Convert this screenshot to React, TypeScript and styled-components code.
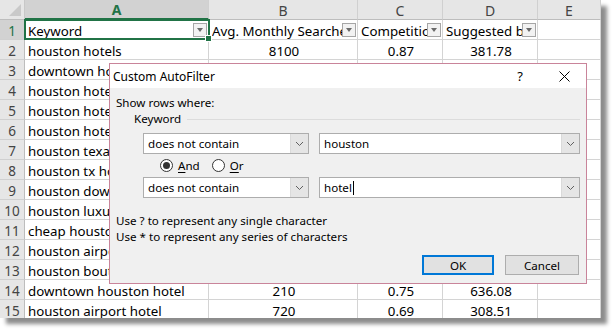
import React from "react";
import styled, { createGlobalStyle, css } from "styled-components";

const GlobalStyle = createGlobalStyle`
  html, body { margin: 0; padding: 0; background: #ffffff; }
  #root { width: 616px; height: 333px; }
`;

const GREEN = "#217346";

const Page = styled.div`
  position: relative;
  width: 616px;
  height: 333px;
  overflow: hidden;
  background: #ffffff;
`;

const Sheet = styled.div`
  width: 601px;
  height: 318px;
  overflow: hidden;
  display: grid;
  grid-template-columns: 25px 184px 149px 85px 95px 63px;
  grid-template-rows: 20px repeat(15, 20px);
  box-shadow: 6px 6px 4px rgba(0, 0, 0, 0.45);
  background: #ffffff;
  font-family: "Noto Sans", "Open Sans", sans-serif;
`;

const Corner = styled.div`
  position: relative;
  background: #e6e6e6;
  border-right: 1px solid #c8c8c8;
  border-bottom: 1px solid #bdbdbd;
  box-sizing: border-box;
  &::after {
    content: "";
    position: absolute;
    right: 3px;
    bottom: 3px;
    width: 0;
    height: 0;
    border-left: 12px solid transparent;
    border-bottom: 12px solid #c9c9c9;
  }
`;

const ColHeader = styled.div<{ $selected?: boolean }>`
  display: flex;
  align-items: center;
  justify-content: center;
  box-sizing: border-box;
  background: ${(p) => (p.$selected ? "#d2d2d2" : "#e6e6e6")};
  border-right: 1px solid #d0d0d0;
  border-bottom: ${(p) => (p.$selected ? `2px solid ${GREEN}` : "1px solid #bdbdbd")};
  color: ${(p) => (p.$selected ? GREEN : "#444444")};
  font-weight: ${(p) => (p.$selected ? 700 : 400)};
  font-size: 14px;
  padding-top: 1px;
`;

const RowHeader = styled.div<{ $selected?: boolean }>`
  display: flex;
  align-items: center;
  justify-content: center;
  box-sizing: border-box;
  background: ${(p) => (p.$selected ? "#d2d2d2" : "#e6e6e6")};
  border-right: 1px solid #bdbdbd;
  border-bottom: 1px solid #d0d0d0;
  color: ${(p) => (p.$selected ? GREEN : "#444444")};
  font-size: 13.5px;
  padding-top: 2px;
`;

const Cell = styled.div<{ $center?: boolean; $active?: boolean }>`
  position: relative;
  display: flex;
  align-items: center;
  justify-content: ${(p) => (p.$center ? "center" : "flex-start")};
  box-sizing: border-box;
  border-right: 1px solid #d4d4d4;
  border-bottom: 1px solid #d4d4d4;
  padding: 3px 1px 0 3px;
  font-size: 13.3px;
  color: #000000;
  white-space: nowrap;
  overflow: ${(p) => (p.$active ? "visible" : "hidden")};
  ${(p) =>
    p.$active &&
    css`
      z-index: 2;
      &::before {
        content: "";
        position: absolute;
        left: -1px;
        top: -1px;
        right: -2px;
        bottom: -1px;
        border: 2px solid ${GREEN};
        pointer-events: none;
      }
      &::after {
        content: "";
        position: absolute;
        right: -4px;
        bottom: -3px;
        width: 5px;
        height: 5px;
        background: ${GREEN};
        border: 1px solid #ffffff;
      }
    `}
`;

const CellText = styled.span`
  flex: 1;
  min-width: 0;
  overflow: hidden;
  white-space: nowrap;
`;

const FilterButton = styled.span`
  flex: 0 0 auto;
  width: 14px;
  height: 14px;
  margin-top: -2px;
  box-sizing: border-box;
  border: 1px solid #a6a6a6;
  background: #f2f2f2;
  display: flex;
  align-items: center;
  justify-content: center;
  &::after {
    content: "";
    width: 0;
    height: 0;
    border-left: 3.5px solid transparent;
    border-right: 3.5px solid transparent;
    border-top: 4px solid #6a6a6a;
  }
`;

/* ---------- dialog ---------- */

const Dialog = styled.div`
  position: absolute;
  left: 109px;
  top: 63px;
  width: 478px;
  height: 221px;
  box-sizing: border-box;
  border: 1px solid #c9849a;
  background: #f0f0f0;
  display: flex;
  flex-direction: column;
  font-family: "Noto Sans", "Open Sans", sans-serif;
  font-size: 11.6px;
  color: #000000;
  z-index: 5;
`;

const TitleBar = styled.div`
  height: 24px;
  flex: 0 0 24px;
  background: #ffffff;
  display: flex;
  align-items: center;
  padding-left: 3px;
`;

const Title = styled.span`
  flex: 1;
  font-size: 12px;
  padding-top: 1px;
`;

const TitleButton = styled.span`
  width: 44px;
  display: flex;
  align-items: center;
  justify-content: center;
  font-size: 13px;
`;

const Body = styled.div`
  flex: 1;
  display: flex;
  flex-direction: column;
  padding: 7px 6px 8px 6px;
`;

const Line = styled.div<{ $indent?: number; $top?: number }>`
  height: 16px;
  line-height: 16px;
  display: flex;
  align-items: center;
  margin-left: ${(p) => p.$indent ?? 0}px;
  margin-top: ${(p) => p.$top ?? 0}px;
  white-space: nowrap;
`;

const GroupRule = styled.span`
  flex: 1;
  height: 1px;
  background: #dcdcdc;
  margin-left: 6px;
`;

const CriteriaRow = styled.div<{ $top: number }>`
  display: flex;
  gap: 10px;
  margin-left: 27px;
  margin-top: ${(p) => p.$top}px;
`;

const Combo = styled.div<{ $width: number }>`
  width: ${(p) => p.$width}px;
  height: 21px;
  box-sizing: border-box;
  border: 1px solid #adadad;
  background: #ffffff;
  display: flex;
  align-items: stretch;
`;

const ComboText = styled.span`
  flex: 1;
  display: flex;
  align-items: center;
  padding-left: 4px;
`;

const Caret = styled.span`
  display: inline-block;
  width: 1px;
  height: 14px;
  background: #000000;
  margin-left: 1px;
`;

const DropButton = styled.span`
  width: 17px;
  background: #e5e5e5;
  border-left: 1px solid #dadada;
  display: flex;
  align-items: center;
  justify-content: center;
`;

const RadioRow = styled.div`
  display: flex;
  align-items: center;
  height: 16px;
  margin-top: 3px;
  margin-left: 44px;
  gap: 12px;
`;

const RadioLabel = styled.label`
  display: flex;
  align-items: center;
  gap: 5px;
`;

const RadioCircle = styled.span<{ $checked?: boolean }>`
  width: 13px;
  height: 13px;
  box-sizing: border-box;
  border: 1px solid #333333;
  border-radius: 50%;
  background: #ffffff;
  display: flex;
  align-items: center;
  justify-content: center;
  &::after {
    content: "";
    width: 7px;
    height: 7px;
    border-radius: 50%;
    background: ${(p) => (p.$checked ? "#333333" : "transparent")};
  }
`;

const Mnemonic = styled.span`
  text-decoration: underline;
  text-underline-offset: 2px;
`;

const ButtonRow = styled.div`
  display: flex;
  justify-content: flex-end;
  gap: 11px;
  margin-top: 10px;
  margin-right: 1px;
`;

const DlgButton = styled.button<{ $default?: boolean; $width: number }>`
  width: ${(p) => p.$width}px;
  height: 20px;
  box-sizing: border-box;
  margin: 0;
  padding: 0;
  background: #e1e1e1;
  border: ${(p) => (p.$default ? "2px solid #0078d7" : "1px solid #adadad")};
  font-family: "Noto Sans", "Open Sans", sans-serif;
  font-size: 11.6px;
  color: #000000;
`;

const Chevron = () => (
  <svg width="9" height="6" viewBox="0 0 9 6">
    <path d="M1 1 L4.5 4.5 L8 1" fill="none" stroke="#606060" strokeWidth="1" />
  </svg>
);

const CloseIcon = () => (
  <svg width="11" height="11" viewBox="0 0 11 11">
    <path d="M0.5 0.5 L10.5 10.5 M10.5 0.5 L0.5 10.5" stroke="#000" strokeWidth="1" />
  </svg>
);

const rows: string[][] = [
  ["Keyword", "Avg. Monthly Searches", "Competition", "Suggested bid"],
  ["houston hotels", "8100", "0.87", "381.78"],
  ["downtown houston hotels", "1300", "0.83", "504.09"],
  ["houston hotels downtown", "1000", "0.86", "497.51"],
  ["houston hotels near galleria", "880", "0.91", "443.28"],
  ["houston hotels medical center", "590", "0.84", "512.33"],
  ["houston texas hotels", "880", "0.88", "356.17"],
  ["houston tx hotels", "720", "0.85", "379.46"],
  ["houston downtown hotels", "480", "0.81", "528.60"],
  ["houston luxury hotels", "390", "0.72", "602.14"],
  ["cheap houston hotels", "320", "0.95", "212.47"],
  ["houston airport hotels", "880", "0.74", "301.92"],
  ["houston boutique hotels", "260", "0.68", "588.35"],
  ["downtown houston hotel", "210", "0.75", "636.08"],
  ["houston airport hotel", "720", "0.69", "308.51"],
];

const columns = ["A", "B", "C", "D", "E"];

export default function App() {
  return (
    <Page>
      <GlobalStyle />
      <Sheet>
        <Corner />
        {columns.map((c) => (
          <ColHeader key={c} $selected={c === "A"}>
            {c}
          </ColHeader>
        ))}
        {rows.map((r, i) => (
          <React.Fragment key={i}>
            <RowHeader $selected={i === 0}>{i + 1}</RowHeader>
            {i === 0 ? (
              <>
                {r.map((h, j) => (
                  <Cell key={j} $active={j === 0}>
                    <CellText>{h}</CellText>
                    <FilterButton />
                  </Cell>
                ))}
                <Cell />
              </>
            ) : (
              <>
                <Cell>{r[0]}</Cell>
                <Cell $center>{r[1]}</Cell>
                <Cell $center>{r[2]}</Cell>
                <Cell $center>{r[3]}</Cell>
                <Cell />
              </>
            )}
          </React.Fragment>
        ))}
      </Sheet>

      <Dialog>
        <TitleBar>
          <Title>Custom AutoFilter</Title>
          <TitleButton>?</TitleButton>
          <TitleButton>
            <CloseIcon />
          </TitleButton>
        </TitleBar>
        <Body>
          <Line>Show rows where:</Line>
          <Line $indent={18}>
            Keyword
            <GroupRule />
          </Line>
          <CriteriaRow $top={6}>
            <Combo $width={166}>
              <ComboText>does not contain</ComboText>
              <DropButton>
                <Chevron />
              </DropButton>
            </Combo>
            <Combo $width={261}>
              <ComboText>houston</ComboText>
              <DropButton>
                <Chevron />
              </DropButton>
            </Combo>
          </CriteriaRow>
          <RadioRow>
            <RadioLabel>
              <RadioCircle $checked />
              <span>
                <Mnemonic>A</Mnemonic>nd
              </span>
            </RadioLabel>
            <RadioLabel>
              <RadioCircle />
              <span>
                <Mnemonic>O</Mnemonic>r
              </span>
            </RadioLabel>
          </RadioRow>
          <CriteriaRow $top={4}>
            <Combo $width={166}>
              <ComboText>does not contain</ComboText>
              <DropButton>
                <Chevron />
              </DropButton>
            </Combo>
            <Combo $width={261}>
              <ComboText>
                hotel
                <Caret />
              </ComboText>
              <DropButton>
                <Chevron />
              </DropButton>
            </Combo>
          </CriteriaRow>
          <Line $top={15}>Use ? to represent any single character</Line>
          <Line>Use * to represent any series of characters</Line>
          <ButtonRow>
            <DlgButton $default $width={72}>
              OK
            </DlgButton>
            <DlgButton $width={74}>Cancel</DlgButton>
          </ButtonRow>
        </Body>
      </Dialog>
    </Page>
  );
}
